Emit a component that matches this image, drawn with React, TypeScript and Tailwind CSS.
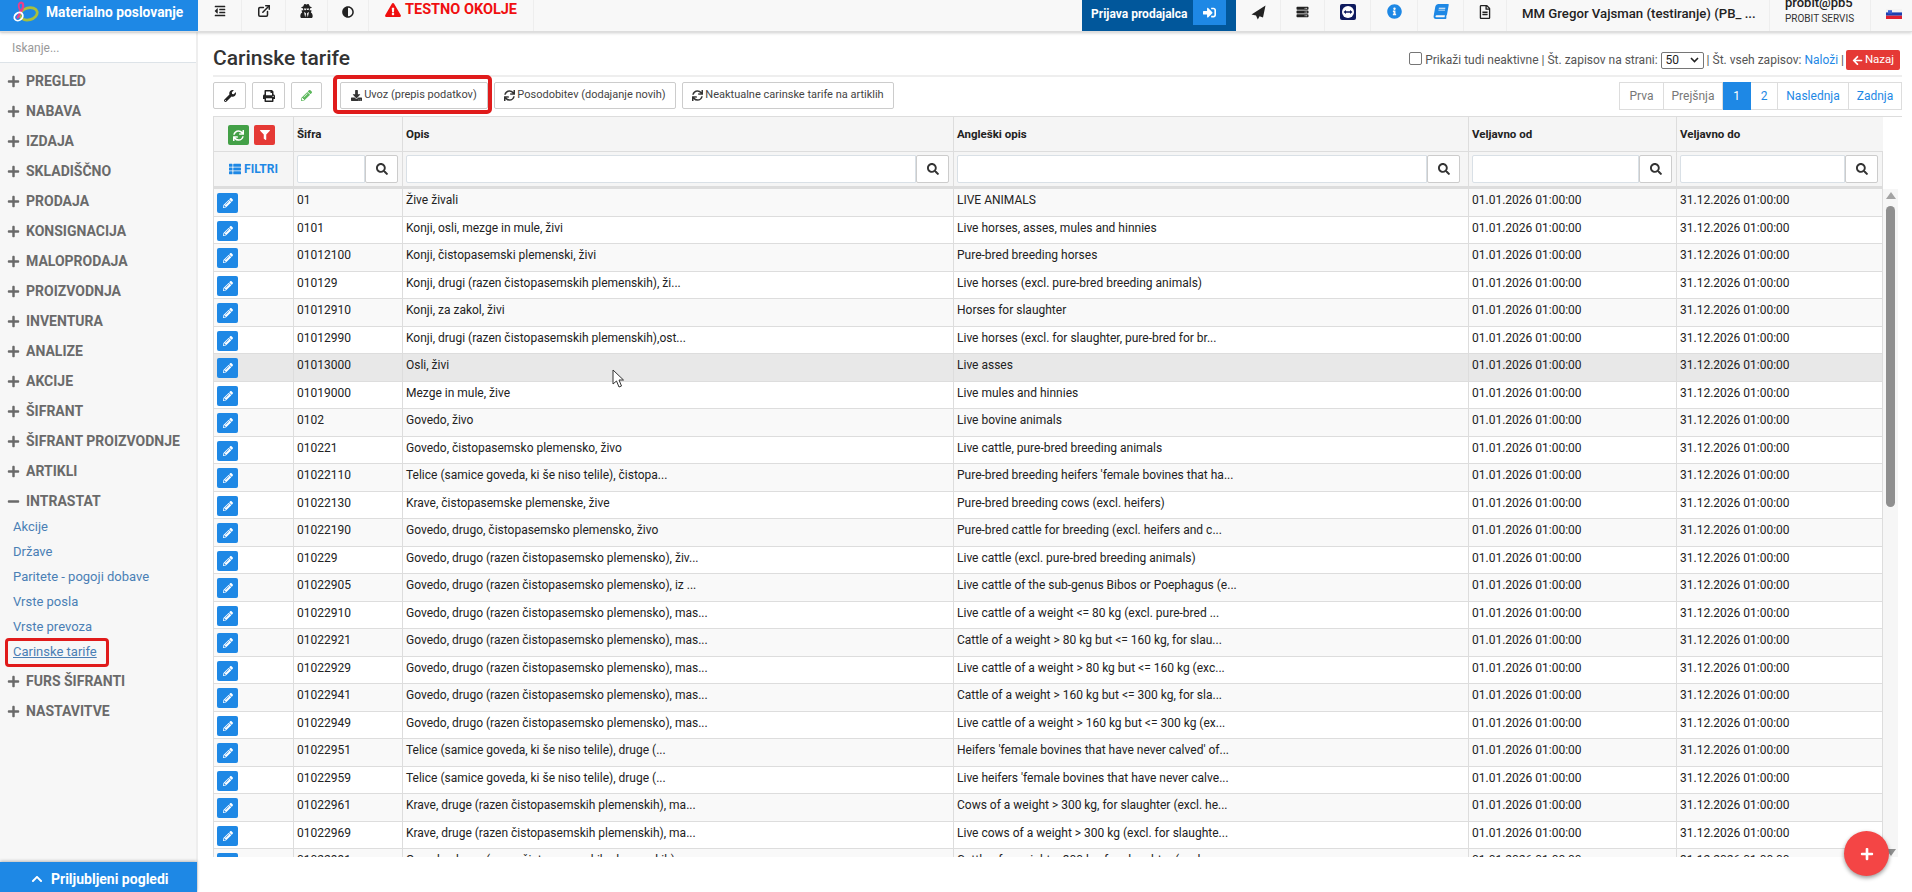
import React from "react";
import {
  FaAdjust, FaArrowLeft, FaBook, FaChevronUp, FaDownload, FaExclamationTriangle, FaFilter, FaInfoCircle,
  FaMinus, FaOutdent, FaPencilAlt, FaPlus, FaPrint, FaRegFileAlt, FaSearch, FaServer,
  FaSignInAlt, FaSync, FaThList, FaUserSecret, FaWrench,
} from "react-icons/fa";
import { FiExternalLink } from "react-icons/fi";

const rows: [string, string, string][] = [
  ["01", "Žive živali", "LIVE ANIMALS"],
  ["0101", "Konji, osli, mezge in mule, živi", "Live horses, asses, mules and hinnies"],
  ["01012100", "Konji, čistopasemski plemenski, živi", "Pure-bred breeding horses"],
  ["010129", "Konji, drugi (razen čistopasemskih plemenskih), ži...", "Live horses (excl. pure-bred breeding animals)"],
  ["01012910", "Konji, za zakol, živi", "Horses for slaughter"],
  ["01012990", "Konji, drugi (razen čistopasemskih plemenskih),ost...", "Live horses (excl. for slaughter, pure-bred for br..."],
  ["01013000", "Osli, živi", "Live asses"],
  ["01019000", "Mezge in mule, žive", "Live mules and hinnies"],
  ["0102", "Govedo, živo", "Live bovine animals"],
  ["010221", "Govedo, čistopasemsko plemensko, živo", "Live cattle, pure-bred breeding animals"],
  ["01022110", "Telice (samice goveda, ki še niso telile), čistopa...", "Pure-bred breeding heifers 'female bovines that ha..."],
  ["01022130", "Krave, čistopasemske plemenske, žive", "Pure-bred breeding cows (excl. heifers)"],
  ["01022190", "Govedo, drugo, čistopasemsko plemensko, živo", "Pure-bred cattle for breeding (excl. heifers and c..."],
  ["010229", "Govedo, drugo (razen čistopasemsko plemensko), živ...", "Live cattle (excl. pure-bred breeding animals)"],
  ["01022905", "Govedo, drugo (razen čistopasemsko plemensko), iz ...", "Live cattle of the sub-genus Bibos or Poephagus (e..."],
  ["01022910", "Govedo, drugo (razen čistopasemsko plemensko), mas...", "Live cattle of a weight <= 80 kg (excl. pure-bred ..."],
  ["01022921", "Govedo, drugo (razen čistopasemsko plemensko), mas...", "Cattle of a weight > 80 kg but <= 160 kg, for slau..."],
  ["01022929", "Govedo, drugo (razen čistopasemsko plemensko), mas...", "Live cattle of a weight > 80 kg but <= 160 kg (exc..."],
  ["01022941", "Govedo, drugo (razen čistopasemsko plemensko), mas...", "Cattle of a weight > 160 kg but <= 300 kg, for sla..."],
  ["01022949", "Govedo, drugo (razen čistopasemsko plemensko), mas...", "Live cattle of a weight > 160 kg but <= 300 kg (ex..."],
  ["01022951", "Telice (samice goveda, ki še niso telile), druge (...", "Heifers 'female bovines that have never calved' of..."],
  ["01022959", "Telice (samice goveda, ki še niso telile), druge (...", "Live heifers 'female bovines that have never calve..."],
  ["01022961", "Krave, druge (razen čistopasemskih plemenskih), ma...", "Cows of a weight > 300 kg, for slaughter (excl. he..."],
  ["01022969", "Krave, druge (razen čistopasemskih plemenskih), ma...", "Live cows of a weight > 300 kg (excl. for slaughte..."],
  ["01022991", "Govedo, drugo (razen čistopasemskih plemenskih)", "Cattle of a weight > 300 kg, for slaughter (excl. ..."],
];

const menuA = ["PREGLED", "NABAVA", "IZDAJA", "SKLADIŠČNO", "PRODAJA", "KONSIGNACIJA", "MALOPRODAJA", "PROIZVODNJA", "INVENTURA", "ANALIZE", "AKCIJE", "ŠIFRANT", "ŠIFRANT PROIZVODNJE", "ARTIKLI"];
const sub = ["Akcije", "Države", "Paritete - pogoji dobave", "Vrste posla", "Vrste prevoza"];
const grid = "grid grid-cols-[80px_109px_551px_515px_208px_207px]";

function MenuItem({ label, open }: { label: string; open?: boolean }) {
  return (
    <div className="h-[30px] flex items-center pl-[7px] gap-[6px] text-[14px] font-bold text-[#6a6a6a]">
      {open ? <FaMinus className="w-[13px] h-[13px]" /> : <FaPlus className="w-[13px] h-[13px]" />}
      <span>{label}</span>
    </div>
  );
}

function TopCell({ w, children }: { w: string; children: React.ReactNode }) {
  return <div className={`${w} h-full flex items-center justify-center border-r border-[#eeeeee] shrink-0`}>{children}</div>;
}

function FilterCell({ pad }: { pad?: string }) {
  return (
    <div className={`h-full border-l border-[#dddddd] flex items-center pl-[3px] ${pad ?? "pr-[4px]"}`}>
      <div className="flex-1 h-[28px] bg-white border border-[#d9e0e6] rounded-l-[2px]" />
      <div className="w-[33px] h-[28px] bg-white border border-[#cccccc] rounded-[2px] flex items-center justify-center">
        <FaSearch className="w-[12px] h-[12px] text-[#333]" />
      </div>
    </div>
  );
}

function ToolButton({ children, w }: { children: React.ReactNode; w: string }) {
  return (
    <div className={`${w} h-[27px] bg-white border border-[#cccccc] rounded-[2px] flex items-center justify-center gap-[2px] text-[11px] text-[#444] whitespace-nowrap`}>{children}</div>
  );
}

function Page({ label, w, tone }: { label: string; w: string; tone: "gray" | "blue" | "active" }) {
  const c = tone === "active" ? "bg-[#1e88e5] text-white border-[#1e88e5]" : tone === "blue" ? "bg-white text-[#1e88e5] border-[#dddddd]" : "bg-white text-[#777] border-[#dddddd]";
  return <div className={`${w} h-[28px] border-y border-r flex items-center justify-center text-[12px] ${c}`}>{label}</div>;
}

export default function App() {
  return (
    <div className="w-[1912px] h-[892px] overflow-hidden bg-white flex flex-col text-[12px] text-[#222] font-['Roboto',sans-serif] relative">
      {/* top bar */}
      <div className="h-[32px] flex shrink-0 bg-[#f8f8f8] border-b border-[#dddddd] shadow-[0_1px_3px_rgba(0,0,0,0.2)] z-10">
        <div className="w-[198px] h-[31px] bg-[#1e88e5] flex items-start pl-[11px] gap-[7px] shrink-0">
          <svg width="28" height="22" viewBox="0 0 30 24" fill="none" className="mt-[1px]">
            <ellipse cx="19" cy="14" rx="9.5" ry="6.5" stroke="#a8bf3c" strokeWidth="3" transform="rotate(-15 19 14)" />
            <path d="M10 2C13 1 14 5 12 9L7 18" stroke="#e83e8c" strokeWidth="2.5" strokeLinecap="round" />
            <path d="M10 2C7 3 8 7 10 11" stroke="#e83e8c" strokeWidth="2" strokeLinecap="round" />
            <ellipse cx="8" cy="17" rx="5" ry="4" stroke="#ffffff" strokeWidth="2" transform="rotate(-40 8 17)" />
          </svg>
          <span className="text-[13.8px] font-bold text-white leading-[16px] mt-[4px] whitespace-nowrap">Materialno poslovanje</span>
        </div>
        <TopCell w="w-[44px]"><FaOutdent className="w-[14px] h-[12px] text-[#222] -mt-[9px]" /></TopCell>
        <TopCell w="w-[44px]"><FiExternalLink strokeWidth={2.6} className="w-[14px] h-[14px] text-[#222] -mt-[9px]" /></TopCell>
        <TopCell w="w-[42px]"><FaUserSecret className="w-[13px] h-[14px] text-[#222] -mt-[9px]" /></TopCell>
        <TopCell w="w-[41px]"><FaAdjust className="w-[12px] h-[12px] text-[#222] -mt-[8px]" /></TopCell>
        <div className="flex items-start pt-[2px] pl-[16px] gap-[4px] w-[165px] h-full border-r border-[#eeeeee] shrink-0">
          <FaExclamationTriangle className="w-[16px] h-[14px] mt-[1px] text-[#f00f0f]" />
          <span className="text-[14.5px] font-bold text-[#f00f0f] leading-[16px] whitespace-nowrap">TESTNO OKOLJE</span>
        </div>
        <div className="flex-1" />
        <div className="w-[154px] h-[31px] bg-[#01579b] flex items-start shrink-0">
          <span className="w-[111px] pl-[9px] pt-[5px] text-[12px] font-bold text-white whitespace-nowrap">Prijava prodajalca</span>
          <div className="w-[33px] h-[25px] bg-[#1e88e5] flex items-center justify-center"><FaSignInAlt className="w-[13px] h-[13px] text-white" /></div>
        </div>
        <TopCell w="w-[45px]">
          <svg width="15" height="15" viewBox="0 0 15 15" className="-mt-[6px]">
            <path d="M14.5 .5L.5 9.5l4.5 1L6.8 14.5l1.8-3.2L12 12.5z" fill="#222" />
          </svg>
        </TopCell>
        <TopCell w="w-[44px]"><FaServer className="w-[13px] h-[12px] text-[#222] -mt-[8px]" /></TopCell>
        <TopCell w="w-[46px]">
          <svg width="16" height="16" viewBox="0 0 16 16" className="-mt-[7px]">
            <rect width="16" height="16" rx="2" fill="#0e1a5e" />
            <circle cx="8" cy="8" r="6" fill="#fff" />
            <path d="M3.5 8l2.5-2v1.3h4V6l2.5 2-2.5 2V8.7H6V10z" fill="#0e1a5e" />
          </svg>
        </TopCell>
        <TopCell w="w-[47px]"><FaInfoCircle className="w-[15px] h-[15px] text-[#1e88e5] -mt-[9px]" /></TopCell>
        <TopCell w="w-[46px]"><FaBook className="w-[16px] h-[15px] text-[#1e88e5] -mt-[9px] -skew-x-[10deg]" /></TopCell>
        <TopCell w="w-[43px]"><FaRegFileAlt className="w-[12px] h-[14px] text-[#222] -mt-[7px]" /></TopCell>
        <div className="w-[263px] h-full flex items-start pl-[15px] pt-[4px] border-r border-[#eeeeee] shrink-0 text-[13.2px] font-medium text-[#222] whitespace-nowrap">MM Gregor Vajsman (testiranje) (PB_ ...</div>
        <div className="w-[101px] h-full border-r border-[#eeeeee] shrink-0 pl-[15px] overflow-hidden flex flex-col">
          <span className="text-[13px] font-medium text-[#222] leading-[14px] -mt-[4px] whitespace-nowrap">probit@pb5</span>
          <span className="text-[10px] text-[#333] leading-[14px] mt-[2px] whitespace-nowrap">PROBIT SERVIS</span>
        </div>
        <div className="w-[41px] flex items-start justify-center pt-[9px] pl-[5px] shrink-0">
          <svg width="16" height="10" viewBox="0 0 16 10">
            <rect width="16" height="3.4" fill="#f3f3f3" />
            <rect y="3.4" width="16" height="3.3" fill="#1c3fb0" />
            <rect y="6.7" width="16" height="3.3" fill="#e02030" />
            <rect x="2" y="1.2" width="4" height="3.4" fill="#3b5fd0" />
          </svg>
        </div>
      </div>

      {/* body */}
      <div className="flex-1 flex min-h-0">
        {/* sidebar */}
        <div className="w-[198px] shrink-0 bg-[#f7f7f7] border-r-2 border-[#eeeeee] flex flex-col relative">
          <div className="h-[30px] mt-[1px] bg-white border-b border-[#dde3e8] flex items-center pl-3 text-[12px] text-[#999] shrink-0">Iskanje...</div>
          <div className="pt-[3px] flex flex-col">
            {menuA.map((m) => <MenuItem key={m} label={m} />)}
            <MenuItem label="INTRASTAT" open />
            <div className="flex flex-col text-[13px] text-[#4a7fb5] pl-[13px] -mt-[2px]">
              {sub.map((s) => <div key={s} className="h-[25px] flex items-center">{s}</div>)}
              <div className="h-[25px] flex items-center underline">Carinske tarife</div>
            </div>
            <div className="mt-[2px]">
              <MenuItem label="FURS ŠIFRANTI" />
              <MenuItem label="NASTAVITVE" />
            </div>
          </div>
          <div className="absolute left-[5px] top-[606px] w-[104px] h-[29px] border-[3px] border-[#e01b1b] rounded-[4px]" />
          <div className="mt-auto h-[30px] bg-[#1e88e5] shadow-[0_-1px_3px_rgba(0,0,0,0.25)] flex items-center pl-[30px] gap-[7px] text-white font-bold text-[14px] -mr-[1px]">
            <FaChevronUp className="w-[14px] h-[12px] mt-[3px]" />
            <span className="mt-[4px]">Priljubljeni pogledi</span>
          </div>
        </div>

        {/* content */}
        <div className="flex-1 min-w-0 flex flex-col pl-[15px] pr-[10px] relative">
          <div className="h-[43px] flex items-start justify-between shrink-0">
            <h1 className="text-[21px] font-medium text-[#333] mt-[11px] leading-[30px]">Carinske tarife</h1>
            <div className="flex items-center mt-[18px] mr-[2px] text-[12px] text-[#555] whitespace-nowrap">
              <span className="w-[13px] h-[13px] border border-[#767676] rounded-[2px] bg-white mr-[3px] -mt-[3px]" />
              <span>Prikaži tudi neaktivne | Št. zapisov na strani:</span>
              <span className="w-[43px] h-[17px] border border-[#767676] rounded-[2px] bg-white mx-[3px] pl-[4px] flex items-center justify-between pr-[4px] text-[#222]">
                50
                <svg width="9" height="6" viewBox="0 0 9 6" fill="none"><path d="M1 1l3.5 3.5L8 1" stroke="#222" strokeWidth="1.6" /></svg>
              </span>
              <span>| Št. vseh zapisov: <span className="text-[#1e88e5]">Naloži</span> |</span>
              <span className="ml-[2px] w-[54px] h-[20px] bg-[#e53935] rounded-[2px] text-white flex items-center justify-center gap-[2px] text-[11.5px]">
                <FaArrowLeft className="w-[11px] h-[11px]" />Nazaj
              </span>
            </div>
          </div>
          <div className="h-[2px] bg-[#eeeeee] shrink-0" />
          <div className="h-[39px] pt-[5px] flex items-start gap-[6px] shrink-0 relative">
            <ToolButton w="w-[33px]"><FaWrench className="w-[12px] h-[12px] text-[#222]" /></ToolButton>
            <ToolButton w="w-[33px]"><FaPrint className="w-[12px] h-[12px] text-[#222]" /></ToolButton>
            <ToolButton w="w-[31px]"><FaPencilAlt className="w-[11px] h-[11px] text-[#5cb85c]" /></ToolButton>
            <div className="w-[6px]" />
            <ToolButton w="w-[148px]"><FaDownload className="w-[11px] h-[11px] text-[#333]" />Uvoz (prepis podatkov)</ToolButton>
            <ToolButton w="w-[182px]"><FaSync className="w-[11px] h-[11px] text-[#333]" />Posodobitev (dodajanje novih)</ToolButton>
            <ToolButton w="w-[212px]"><FaSync className="w-[11px] h-[11px] text-[#333]" />Neaktualne carinske tarife na artiklih</ToolButton>
            <div className="absolute left-[120px] top-[-2px] w-[159px] h-[39px] border-[4px] border-[#e01b1b] rounded-[5px]" />
            <div className="ml-auto flex border-l border-[#dddddd] h-[28px]">
              <Page label="Prva" w="w-[44px]" tone="gray" />
              <Page label="Prejšnja" w="w-[59px]" tone="gray" />
              <Page label="1" w="w-[28px]" tone="active" />
              <Page label="2" w="w-[27px]" tone="blue" />
              <Page label="Naslednja" w="w-[71px]" tone="blue" />
              <Page label="Zadnja" w="w-[53px]" tone="blue" />
            </div>
          </div>

          {/* table head */}
          <div className="shrink-0 border-t border-[#dddddd]">
            <div className={`${grid} h-[35px]`}>
              <div className="bg-[#f5f5f5] border-l border-b border-[#dddddd] flex items-start pt-[8px] pl-[14px] gap-[5px]">
                <div className="w-[21px] h-[20px] bg-[#43a047] rounded-[2px] flex items-center justify-center"><FaSync className="w-[11px] h-[11px] text-white" /></div>
                <div className="w-[21px] h-[20px] bg-[#e53935] rounded-[2px] flex items-center justify-center"><FaFilter className="w-[10px] h-[10px] text-white" /></div>
              </div>
              {["Šifra", "Opis", "Angleški opis", "Veljavno od", "Veljavno do"].map((h) => (
                <div key={h} className="bg-[#f5f5f5] border-l border-b border-[#dddddd] pl-[3px] pt-[10px] text-[11.5px] font-bold text-[#222] leading-[14px]">{h}</div>
              ))}
            </div>
            <div className={`${grid} h-[34px]`}>
              <div className="bg-[#f5f5f5] border-l border-[#dddddd] flex items-center justify-center gap-[3px] text-[#1e88e5] font-bold text-[12px]">
                <FaThList className="w-[12px] h-[12px]" />FILTRI
              </div>
              <div className="bg-[#f5f5f5]"><FilterCell pad="pr-[4px]" /></div>
              <div className="bg-[#f5f5f5]"><FilterCell pad="pr-[4px]" /></div>
              <div className="bg-[#f5f5f5]"><FilterCell pad="pr-[8px]" /></div>
              <div className="bg-[#f5f5f5]"><FilterCell pad="pr-[4px]" /></div>
              <div className="bg-[#f5f5f5] border-r border-[#dddddd]"><FilterCell pad="pr-[4px]" /></div>
            </div>
          </div>
          <div className="h-[3px] w-[1670px] bg-[#dddddd] shrink-0" />

          {/* table body */}
          <div className="h-[668px] flex overflow-hidden shrink-0">
            <div className="w-[1670px] shrink-0">
              {rows.map((r, i) => {
                const bg = i === 6 ? "bg-[#e8e8e8]" : i % 2 === 0 ? "bg-[#f9f9f9]" : "bg-white";
                return (
                  <div key={r[0]} className={`${grid} h-[27.5px] ${bg} border-b border-[#dddddd] leading-[14px] text-[12px] text-[#222]`}>
                    <div className="border-l border-[#dddddd] pl-[3px] pt-[4px]">
                      <div className="w-[21px] h-[20px] bg-[#1e88e5] rounded-[2px] flex items-center justify-center">
                        <FaPencilAlt className="w-[10px] h-[10px] text-white" />
                      </div>
                    </div>
                    <div className="border-l border-[#dddddd] pl-[3px] pt-[4px]">{r[0]}</div>
                    <div className="border-l border-[#dddddd] pl-[3px] pt-[4px]">{r[1]}</div>
                    <div className="border-l border-[#dddddd] pl-[3px] pt-[4px]">{r[2]}</div>
                    <div className="border-l border-[#dddddd] pl-[3px] pt-[4px]">01.01.2026 01:00:00</div>
                    <div className="border-l border-[#dddddd] border-r pl-[3px] pt-[4px]">31.12.2026 01:00:00</div>
                  </div>
                );
              })}
            </div>
            <div className="w-[15px] bg-[#f6f6f6] flex flex-col items-center pt-[3px] shrink-0">
              <div className="w-0 h-0 border-x-[5px] border-x-transparent border-b-[7px] border-b-[#a3a3a3]" />
              <div className="w-[9px] h-[301px] mt-[7px] bg-[#8f8f8f] rounded-[5px]" />
              <div className="mt-auto mb-[1px] w-0 h-0 border-x-[5px] border-x-transparent border-t-[7px] border-t-[#8f8f8f]" />
            </div>
          </div>
        </div>
      </div>

      {/* floating button */}
      <div className="absolute left-[1844px] top-[831px] w-[45px] h-[45px] rounded-full bg-[#f44545] shadow-[0_2px_4px_rgba(0,0,0,0.4)] flex items-center justify-center">
        <FaPlus className="w-[14px] h-[14px] text-white" />
      </div>

      {/* pointer */}
      <svg className="absolute left-[612px] top-[369px]" width="14" height="20" viewBox="0 0 14 20">
        <path d="M1 1v14l3.5-3 2.5 6 2.5-1-2.5-6h4.5z" fill="#fff" stroke="#333" strokeWidth="1" />
      </svg>
    </div>
  );
}
